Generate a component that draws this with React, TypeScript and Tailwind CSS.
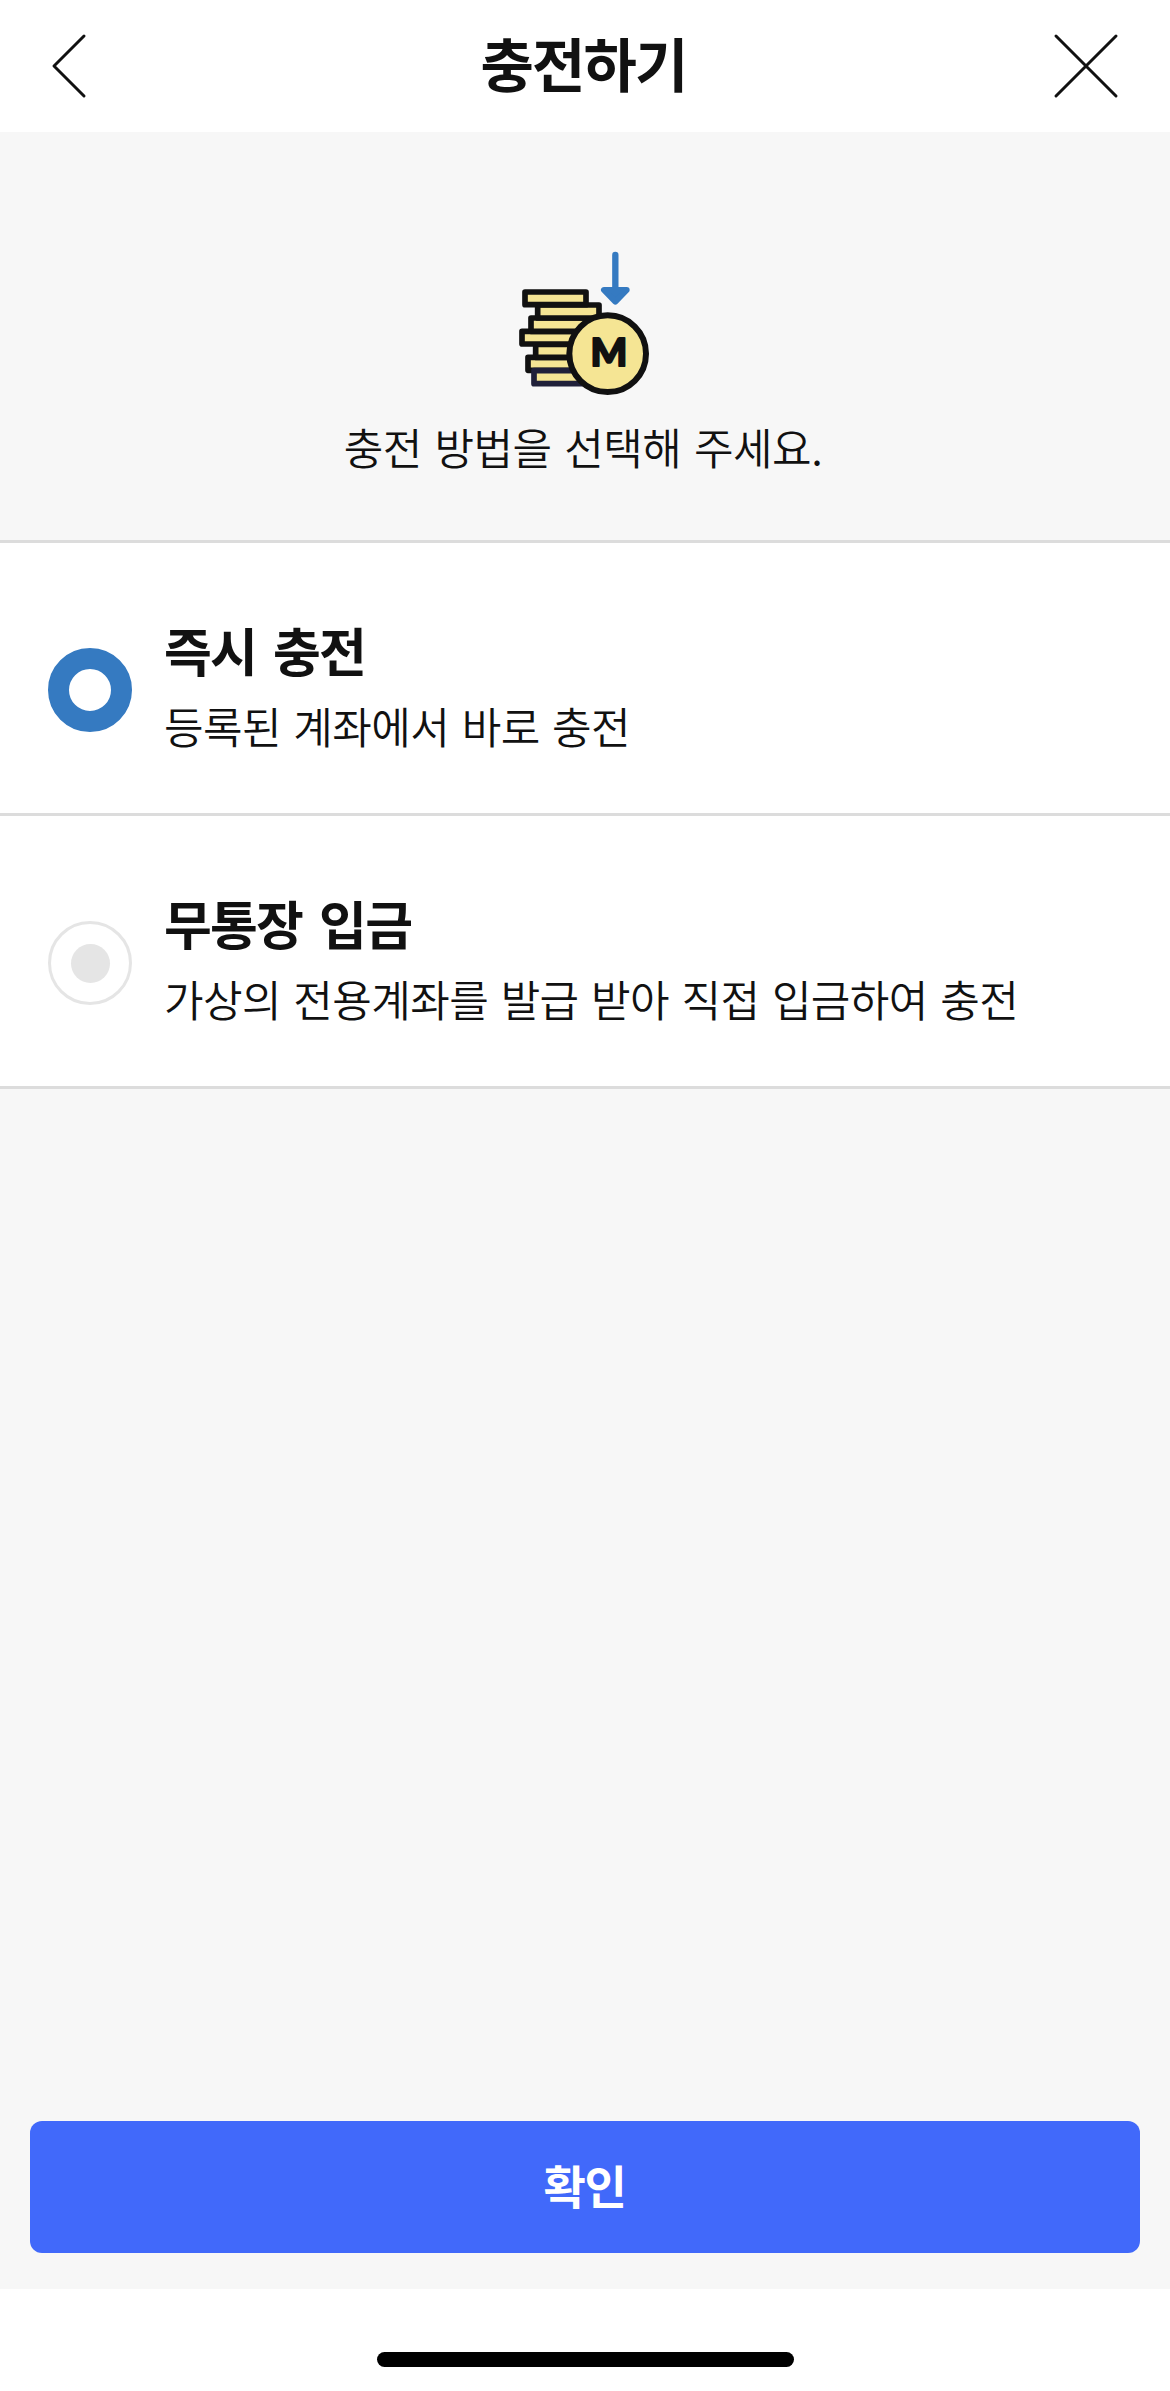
import { useState } from 'react'

interface ChargeMethod {
  id: string
  title: string
  description: string
}

const METHODS: ChargeMethod[] = [
  { id: 'instant', title: '즉시 충전', description: '등록된 계좌에서 바로 충전' },
  { id: 'deposit', title: '무통장 입금', description: '가상의 전용계좌를 발급 받아 직접 입금하여 충전' },
]

function CoinIcon() {
  return (
    <svg width="170" height="180" viewBox="0 0 510 540" fill="none" aria-hidden="true">
      {/* Arrow */}
      <path d="M346 75V176" stroke="#357ac1" strokeWidth="19" strokeLinecap="round" />
      <path d="M312 180H380L346 215Z" fill="#357ac1" stroke="#357ac1" strokeWidth="18" strokeLinejoin="round" />
      {/* Coin stack */}
      <g fill="#f5e594" stroke="#111111" strokeWidth="17" strokeLinejoin="round">
        <rect x="84" y="382" width="190" height="39" />
        <rect x="107" y="343" width="170" height="39" />
        <rect x="66" y="304" width="190" height="38" />
        <rect x="93" y="264" width="180" height="40" />
        <rect x="113" y="225" width="184" height="39" />
        <rect x="75" y="186" width="183" height="38" />
        <rect x="102" y="422" width="180" height="39" stroke="#20203a" />
      </g>
      {/* Front coin */}
      <circle cx="323" cy="371" r="115" fill="#f5e594" stroke="#111111" strokeWidth="18" />
      <text
        x="327"
        y="409"
        textAnchor="middle"
        fill="#111111"
        stroke="#111111"
        strokeWidth="6"
        strokeLinejoin="round"
        fontSize="116"
        className="font-['Lato',sans-serif] font-black"
      >
        M
      </text>
    </svg>
  )
}

function Radio({ checked }: { checked: boolean }) {
  if (checked) {
    return <span className="mt-[37px] size-[84px] shrink-0 rounded-full border-[21px] border-[#357ac1] bg-white" />
  }
  return (
    <span className="mt-[37px] flex size-[84px] shrink-0 items-center justify-center rounded-full border-[3px] border-[#e5e5e5] bg-white">
      <span className="size-[39px] rounded-full bg-[#e5e5e5]" />
    </span>
  )
}

export default function App() {
  const [selected, setSelected] = useState('instant')

  return (
    <div className="flex h-[2391px] w-[1170px] flex-col bg-[#f7f7f7] font-['Noto_Sans_CJK_KR',sans-serif] text-[#111111]">
      {/* Header */}
      <header className="flex h-[132px] items-center justify-between bg-white px-12">
        <button aria-label="뒤로">
          <svg width="42" height="66" viewBox="0 0 42 66" fill="none" stroke="#111111" strokeWidth="3" strokeLinecap="round" strokeLinejoin="round">
            <path d="M36 3L6 33L36 63" />
          </svg>
        </button>
        <h1 className="pb-2 pl-[21px] text-[58px] leading-[76px] font-bold tracking-[-1.8px]">충전하기</h1>
        <button aria-label="닫기">
          <svg width="66" height="66" viewBox="0 0 66 66" fill="none" stroke="#111111" strokeWidth="3" strokeLinecap="round" overflow="visible">
            <path d="M0 3L60 63M60 3L0 63" />
          </svg>
        </button>
      </header>

      {/* Intro */}
      <section className="flex h-[411px] flex-col items-center border-b-[3px] border-[#dcdcdc] pt-[98px]">
        <CoinIcon />
        <p className="mt-1.5 pr-1 text-[43px] leading-[60px] font-[350] tracking-[-0.5px] [word-spacing:3.5px]">
          충전 방법을 선택해 주세요.
        </p>
      </section>

      {/* Charge methods */}
      <div role="radiogroup">
        {METHODS.map((method) => (
          <button
            key={method.id}
            role="radio"
            aria-checked={selected === method.id}
            onClick={() => setSelected(method.id)}
            className="flex h-[273px] w-full items-start gap-8 border-b-[3px] border-[#dcdcdc] bg-white pt-[68px] pl-12 text-left"
          >
            <Radio checked={selected === method.id} />
            <span className="flex flex-col">
              <span className="pt-px text-[52px] leading-[75px] font-bold tracking-[-1.8px] [word-spacing:7px]">{method.title}</span>
              <span className="text-[43px] leading-[76px] font-[350] tracking-[-0.6px] [word-spacing:3.5px]">
                {method.description}
              </span>
            </span>
          </button>
        ))}
      </div>

      {/* Confirm */}
      <div className="mt-auto px-[30px] pb-9">
        <button className="flex h-[132px] w-full items-center justify-center rounded-xl bg-[#4169fa] pr-px pb-1.5 text-[46px] font-bold tracking-[-1.2px] text-white">
          확인
        </button>
      </div>

      {/* Home indicator */}
      <footer className="flex h-[102px] justify-center bg-white pt-[63px]">
        <div className="h-[15px] w-[417px] rounded-full bg-black" />
      </footer>
    </div>
  )
}
